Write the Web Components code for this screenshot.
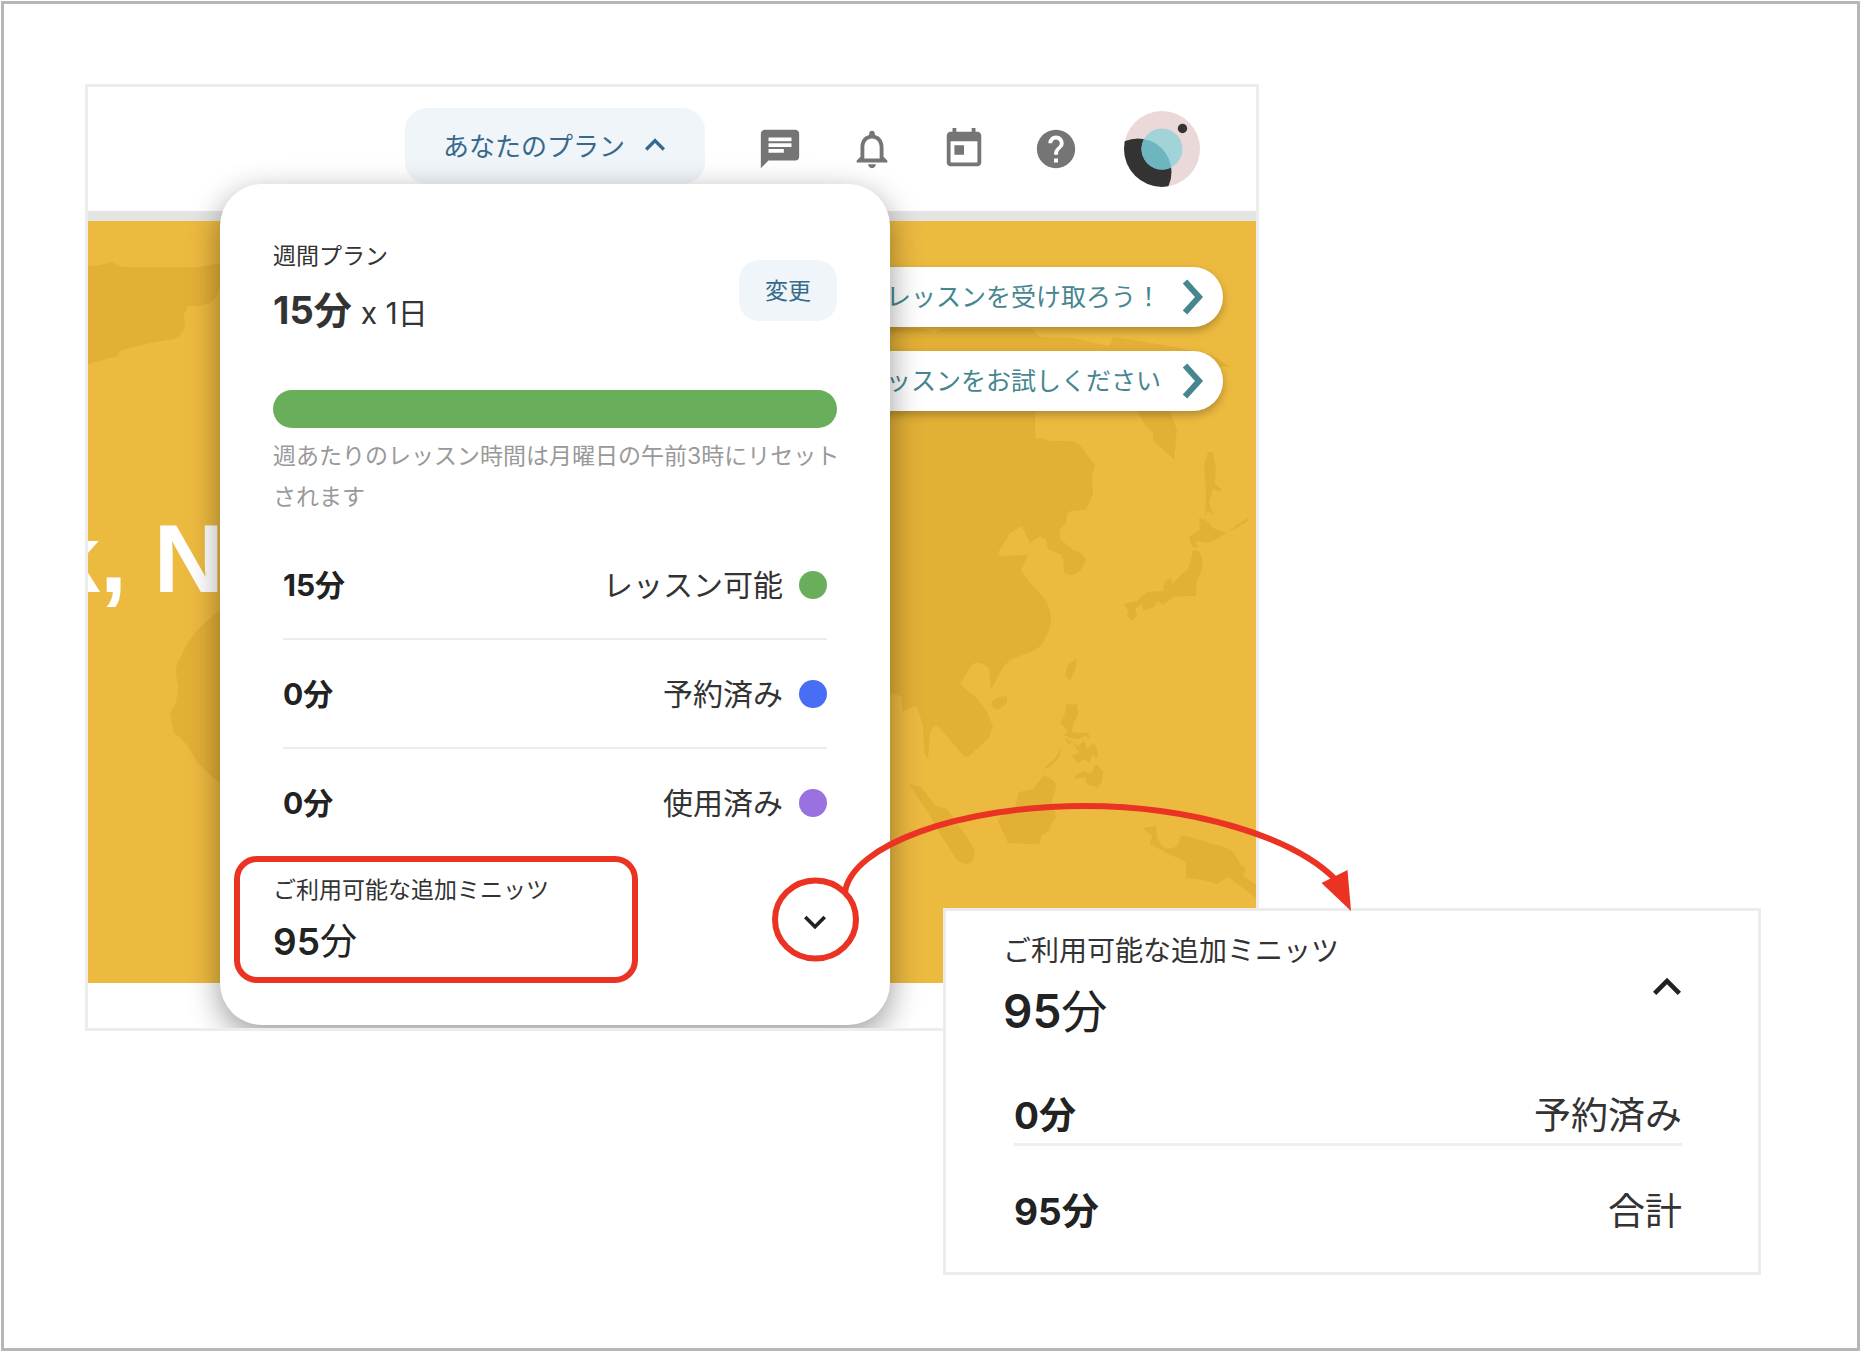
<!DOCTYPE html>
<html lang="ja">
<head>
<meta charset="utf-8">
<title>あなたのプラン</title>
<style>
  body {
    margin: 0;
    background: #fff;
    color: #222;
    font-family: Inter, "Noto Sans CJK JP", sans-serif;
  }
</style>
</head>
<body>
<guide-stage>
  <app-window>
    <app-header slot="header"></app-header>
    <world-hero slot="hero">
      <span slot="title">k, N</span>
      <lesson-pill>レッスンを受け取ろう！</lesson-pill>
      <lesson-pill>ッスンをお試しください</lesson-pill>
    </world-hero>
    <plan-popover slot="popover"></plan-popover>
  </app-window>
  <minutes-panel slot="detail"></minutes-panel>
  <guide-marks slot="marks"></guide-marks>
</guide-stage>

<script>
const RESET = `
  * { box-sizing: border-box; }
  button { font: inherit; border: 0; margin: 0; padding: 0; background: none; color: inherit; cursor: pointer; }
  svg { display: block; }
`;

function define(name, html) {
  customElements.define(name, class extends HTMLElement {
    constructor() {
      super();
      this.attachShadow({ mode: 'open' }).innerHTML = html;
    }
  });
}

define('guide-stage', `
  <style>${RESET}
    :host {
      display: block; box-sizing: border-box; position: relative;
      margin: 1px 2px 3px 1px; padding: 80px 81px;
      min-height: calc(100vh - 4px);
      border: 3px solid #b5b7b7;
    }
    ::slotted([slot="detail"]) { position: absolute; left: 939px; top: 904px; }
    ::slotted([slot="marks"]) { position: absolute; left: 0; top: 0; }
  </style>
  <slot></slot>
  <slot name="detail"></slot>
  <slot name="marks"></slot>
`);

define('app-window', `
  <style>${RESET}
    :host {
      display: block; box-sizing: border-box; position: relative; overflow: hidden;
      width: 100%; max-width: 1174px; padding-bottom: 45px;
      border: 3px solid #ededed; background: #fff;
    }
    ::slotted([slot="popover"]) { position: absolute; left: 132px; top: 97px; }
  </style>
  <slot name="header"></slot>
  <slot name="hero"></slot>
  <slot name="popover"></slot>
`);

define('app-header', `
  <style>${RESET}
    :host {
      display: flex; box-sizing: border-box; align-items: center; justify-content: flex-end;
      height: 134px; padding: 0 56px 0 24px;
      border-bottom: 10px solid #e4e4e4; background: #fff;
    }
    .plan {
      display: flex; align-items: center; align-self: flex-start; gap: 10px;
      height: 76px; padding: 0 30px 3px 38px; margin: 21px 52px 0 0;
      border-radius: 22px; background: #f0f5fa; color: #39698a; font-size: 26px;
    }
    nav { display: flex; gap: 46px; margin-right: 45px; color: #757575; }
  </style>
  <button class="plan" type="button" aria-expanded="true">
    <span>あなたのプラン</span>
    <svg width="40" height="40" viewBox="0 0 24 24" fill="currentColor" aria-hidden="true"><path d="M12 8l-6 6 1.41 1.41L12 10.83l4.59 4.58L18 14z"/></svg>
  </button>
  <nav>
    <button type="button" aria-label="メッセージ"><svg width="46" height="46" viewBox="0 0 24 24" fill="currentColor"><path d="M20 2H4c-1.1 0-1.99.9-1.99 2L2 22l4-4h14c1.100 0 2-.9 2-2V4c0-1.100-.9-2-2-2zM6 9h12v2H6V9zm8 5H6v-2h8v2zm4-6H6V6h12v2z"/></svg></button>
    <button type="button" aria-label="通知"><svg width="46" height="46" viewBox="0 0 24 24" fill="currentColor"><path d="M12 22c1.100 0 2-.9 2-2h-4c0 1.100.890 2 2 2zm6-6v-5c0-3.070-1.640-5.640-4.500-6.320V4c0-.830-.670-1.500-1.500-1.500s-1.500.670-1.500 1.500v.680C7.630 5.360 6 7.920 6 11v5l-2 2v1h16v-1l-2-2zm-2 1H8v-6c0-2.480 1.510-4.500 4-4.500s4 2.020 4 4.500v6z"/></svg></button>
    <button type="button" aria-label="カレンダー"><svg width="46" height="46" viewBox="0 0 24 24" fill="currentColor"><path d="M19 3h-1V1h-2v2H8V1H6v2H5c-1.110 0-1.990.9-1.990 2L3 19c0 1.100.890 2 2 2h14c1.100 0 2-.9 2-2V5c0-1.100-.9-2-2-2zm0 16H5V8h14v11zM7 10h5v5H7z"/></svg></button>
    <button type="button" aria-label="ヘルプ"><svg width="46" height="46" viewBox="0 0 24 24" fill="currentColor"><path d="M12 2C6.480 2 2 6.480 2 12s4.480 10 10 10 10-4.480 10-10S17.520 2 12 2zm1 17h-2v-2h2v2zm2.070-7.750l-.9.920C13.450 12.900 13 13.500 13 15h-2v-.5c0-1.100.450-2.100 1.170-2.830l1.240-1.260c.370-.360.590-.860.590-1.410 0-1.100-.9-2-2-2s-2 .9-2 2H8c0-2.210 1.790-4 4-4s4 1.790 4 4c0 .880-.360 1.680-.930 2.250z"/></svg></button>
  </nav>
  <button type="button" aria-label="プロフィール">
    <svg width="76" height="76" viewBox="0 0 76 76">
      <defs>
        <clipPath id="face"><circle cx="38" cy="38" r="38"/></clipPath>
        <clipPath id="blob"><circle cx="14" cy="61" r="33.5"/></clipPath>
      </defs>
      <g clip-path="url(#face)">
        <rect width="76" height="76" fill="#ead9d8"/>
        <circle cx="14" cy="61" r="33.5" fill="#333"/>
      </g>
      <circle cx="38" cy="38" r="20.500" fill="#a2d3d8"/>
      <circle cx="38" cy="38" r="20.500" fill="#6db6bf" clip-path="url(#blob)"/>
      <circle cx="58.500" cy="17.500" r="4.700" fill="#333"/>
    </svg>
  </button>
`);

define('world-hero', `
  <style>${RESET}
    :host {
      display: flex; box-sizing: border-box; position: relative; overflow: hidden;
      flex-direction: column; height: 762px; padding-top: 46px; background: #edba40;
    }
    .map { position: absolute; right: 0; top: 0; }
    .pills { display: flex; flex-direction: column; align-items: flex-end; gap: 24px; padding-right: 33px; position: relative; }
    h1 {
      position: relative; margin: 92px 0 0 -42px; white-space: nowrap;
      font: 700 97px/112px "Liberation Sans", Arial, sans-serif; color: #fff;
    }
  </style>
  <svg class="map" width="1168" height="762" viewBox="88 221 1168 762" fill="#e3b036" aria-hidden="true">
    <path d="M88 266L100 265 112 262 122 267 200 267 216 264 240 268 222 280 216 297Q210 305 198 306L188 306 184 315 185 328 180 336 174 339 150 343 130 348 120 351 118 356 88 364z"/>
    <path d="M230 600L220 610Q200 626 192 637T181 657Q174 668 176 674L178 687 176 703 170 713 174 733Q184 740 188 747L198 763 215 779 230 790z"/>
    <path d="M880 326L925 329 934 333 942 329 1032 329 1040 337 1073 338 1109 346 1113 337 1146 342 1175 347 1211 355 1231 367 1216 366 1200 362 1180 380 1137 400 1036 400Q1034 420 1036 439L1040 438 1050 441 1068 441Q1077 441 1082 448L1095 465 1092 476 1093 494 1086 510 1072 511Q1066 512 1067 517L1066 523 1060 530V539L1073 550 1082 554 1086 560 1080 571Q1071 579 1064 572L1063 559 1060 554 1048 549 1046 540 1040 536 1030 543 1026 535 1022 526 1010 533 998 553 1000 556 1023 555 1029 554 1021 570 1030 583 1045 599Q1051 610 1051 619T1046 637Q1041 648 1033 651L1012 659Q1005 663 1000 673L991 690 989 669Q980 660 973 664L968 671 960 684 977 698 987 712 993 726 988 739 968 757Q963 757 957 748L938 726Q932 724 930 735L928 759Q924 756 924 745L923 726 917 708Q913 705 910 708L903 712 901 696 880 690z"/>
    <path d="M1137 410L1145 425 1153 433V441L1174 459 1176 440 1177 430 1170 411zM1208 452H1213L1216 469 1215 484 1221 489V492L1213 489 1209 503 1214 516 1208 511 1205 516 1206 494 1204 466z"/>
    <path d="M1199 518L1205 519 1213 528 1227 533 1213 541 1207 543 1195 541 1199 548 1192 547 1189 537 1200 530zM1228 532L1238 524 1248 518 1248 521 1238 527z"/>
    <path d="M1193 550L1199 551 1203 560 1202 569 1197 580 1196 596 1188 596 1173 597 1163 605 1158 601 1154 607 1143 611 1142 604 1135 609 1137 615 1133 621 1127 617 1128 611 1124 604 1137 601 1147 592 1163 591 1165 581 1172 578V584L1180 576 1188 569 1191 559z"/>
    <path d="M1077 659L1075 671 1070 680 1065 676 1068 664zM991 703L998 697 1007 696V703L998 710 992 707zM1067 703L1072 705 1077 704 1078 714 1073 725 1072 732 1080 733 1088 733 1091 739 1085 736 1078 739 1070 738 1064 735 1068 731 1060 723 1065 713z"/>
    <path d="M1072 742L1078 746 1084 741 1087 749 1094 743 1097 748 1098 759 1092 754 1090 763 1083 759 1078 764 1072 756 1079 752zM1064 738L1072 741 1069 745zM1075 776L1083 771 1091 773 1096 764 1103 772 1102 781 1098 788 1087 784 1085 777 1075 779zM1043 769L1055 758 1062 746 1059 758 1050 767z"/>
    <path d="M1044 775L1054 781Q1058 786 1054 793L1052 801 1056 817 1052 823 1049 831 1042 835 1039 844 1028 844 1008 843 998 821Q1001 813 1015 807L1019 792 1033 789z"/>
    <path d="M909 784L921 787 935 805 947 809 963 832Q975 848 975 853L973 860Q968 868 957 860L940 834 928 813z"/>
    <path d="M1142 828L1156 826 1157 837 1162 847Q1173 851 1178 844L1181 836 1187 836 1213 844Q1232 848 1235 855L1240 864 1246 869 1243 876 1256 885V898L1228 877 1217 884 1202 880 1186 878V862L1167 853 1150 844 1152 836z"/>
  </svg>
  <div class="pills"><slot></slot></div>
  <h1><slot name="title"></slot></h1>
`);

define('lesson-pill', `
  <style>${RESET}
    :host { display: block; }
    a {
      display: flex; align-items: center; gap: 21px; height: 60px; padding: 0 19px 0 40px;
      border-radius: 30px; background: #fff; box-shadow: 0 4px 8px rgba(0,0,0,.25);
      color: #45868f; font-size: 25px; line-height: 36px; text-decoration: none; white-space: nowrap;
    }
  </style>
  <a href="#"><slot></slot>
    <svg width="22" height="36" viewBox="0 0 22 36" fill="none" stroke="currentColor" stroke-width="6" aria-hidden="true"><path d="M3 2.500L17 18 3 33.500"/></svg>
  </a>
`);

define('usage-row', `
  <style>${RESET}
    :host {
      display: flex; align-items: center; justify-content: space-between;
      font-size: 30px; line-height: 40px; color: #222;
    }
    .label { display: flex; align-items: center; gap: 16px; color: #333; }
    ::slotted(i) { display: block; width: 28px; height: 28px; border-radius: 50%; }
    b { font-weight: 700; }
  </style>
  <b><slot name="value"></slot></b>
  <span class="label"><slot></slot><slot name="dot"></slot></span>
`);

define('plan-popover', `
  <style>${RESET}
    :host {
      display: block; box-sizing: border-box; width: 670px; padding: 56px 53px 55px;
      border-radius: 42px; background: #fff; box-shadow: 0 10px 32px rgba(0,0,0,.4);
    }
    .top, .extra { display: flex; justify-content: space-between; }
    p { margin: 0; }
    .caption { font-size: 23px; line-height: 32px; color: #333; }
    .plan { display: flex; align-items: baseline; gap: 9px; height: 48px; margin-top: 14px; font-size: 30px; line-height: 48px; color: #333; }
    .plan b { font-size: 38px; }
    .change {
      height: 61px; margin-top: 20px; padding: 0 26px 3px; border-radius: 20px;
      background: #f0f5fa; color: #39698a; font-size: 23px;
    }
    .bar { height: 38px; margin-top: 56px; border-radius: 19px; background: #68ae5b; }
    .note { margin: 8px -8px 0 0; font-size: 23px; line-height: 41px; color: #999; }
    .rows { margin-top: 13px; padding: 0 10px; }
    usage-row { height: 107px; }
    usage-row + usage-row { height: 109px; border-top: 2px solid #ececec; }
    .extra { align-items: center; margin-top: 18px; }
    .total { margin-top: 8px; font-size: 37px; line-height: 56px; }
    .total span { font-weight: 600; }
  </style>
  <div class="top">
    <div>
      <p class="caption">週間プラン</p>
      <p class="plan"><b>15分</b><span>x 1日</span></p>
    </div>
    <button class="change" type="button">変更</button>
  </div>
  <div class="bar"></div>
  <p class="note">週あたりのレッスン時間は月曜日の午前3時にリセットされます</p>
  <div class="rows">
    <usage-row><span slot="value">15分</span>レッスン可能<i slot="dot" style="background:#68ae5b"></i></usage-row>
    <usage-row><span slot="value">0分</span>予約済み<i slot="dot" style="background:#486ef5"></i></usage-row>
    <usage-row><span slot="value">0分</span>使用済み<i slot="dot" style="background:#9a72df"></i></usage-row>
  </div>
  <div class="extra">
    <div>
      <p class="caption">ご利用可能な追加ミニッツ</p>
      <p class="total"><span>95</span>分</p>
    </div>
    <button type="button" aria-label="開く" aria-expanded="false">
      <svg width="44" height="44" viewBox="0 0 24 24" fill="#222"><path d="M16.590 8.590L12 13.170 7.410 8.590 6 10l6 6 6-6z"/></svg>
    </button>
  </div>
`);

define('minutes-panel', `
  <style>${RESET}
    :host {
      display: block; box-sizing: border-box; width: 818px; padding: 20px 63px 36px 57px;
      border: 3px solid #ececec; background: #fff;
    }
    .head { display: flex; align-items: center; justify-content: space-between; }
    p { margin: 0; }
    .caption { font-size: 28px; line-height: 40px; color: #333; }
    .total { margin-top: 8px; font-size: 46px; line-height: 64px; }
    .total span { font-weight: 600; }
    .rows { display: flex; flex-direction: column; gap: 42px; margin-top: 49px; padding: 0 13px 0 11px; }
    usage-row { font-size: 37px; line-height: 48px; }
    usage-row:first-child { padding-bottom: 3px; border-bottom: 3px solid #eee; }
  </style>
  <div class="head">
    <div>
      <p class="caption">ご利用可能な追加ミニッツ</p>
      <p class="total"><span>95</span>分</p>
    </div>
    <button type="button" aria-label="閉じる" aria-expanded="true">
      <svg width="56" height="56" viewBox="0 0 24 24" fill="#222"><path d="M12 8l-6 6 1.410 1.410L12 10.830l4.590 4.580L18 14z"/></svg>
    </button>
  </div>
  <div class="rows">
    <usage-row><span slot="value">0分</span>予約済み</usage-row>
    <usage-row><span slot="value">95分</span>合計</usage-row>
  </div>
`);

define('guide-marks', `
  <style>${RESET}
    :host { display: block; pointer-events: none; }
  </style>
  <svg width="1400" height="1040" viewBox="4 4 1400 1040" fill="none" stroke="#eb3323" stroke-width="6" aria-hidden="true">
    <rect x="237" y="859" width="398" height="121" rx="20"/>
    <ellipse cx="815.500" cy="919.500" rx="40.500" ry="39"/>
    <path d="M845 892C852 845 960 806 1085 806C1190 806 1293 836 1336 880"/>
    <path d="M1351 911L1321.500 883 1347.500 870z" fill="#eb3323" stroke="none"/>
  </svg>
`);
</script>
</body>
</html>
